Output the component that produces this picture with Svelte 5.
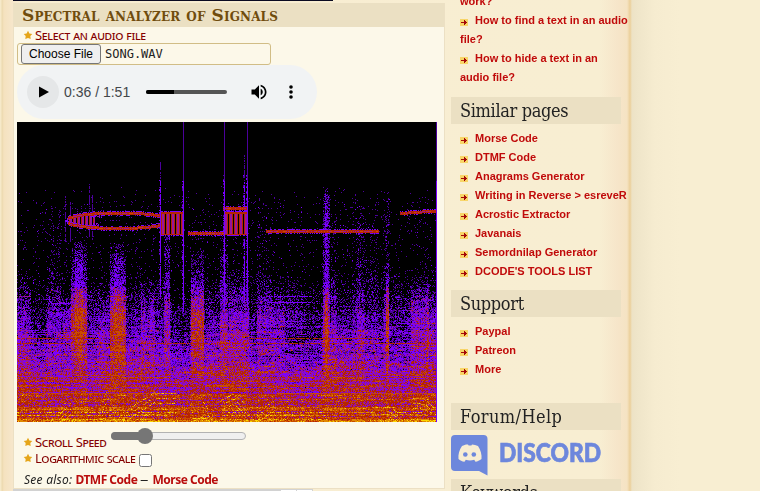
<script>
  import { onMount } from 'svelte';

  const questions = ['How to find a text in an audio file?', 'How to hide a text in an audio file?'];
  const similar = ['Morse Code', 'DTMF Code', 'Anagrams Generator', 'Writing in Reverse > esreveR', 'Acrostic Extractor', 'Javanais', 'Semordnilap Generator', "DCODE'S TOOLS LIST"];
  const support = ['Paypal', 'Patreon', 'More'];

  let canvas = $state();

  // Heat palette, from silence to full level
  const palette = [[0, 0, 0], [75, 0, 155], [122, 0, 255], [152, 18, 158], [182, 36, 2], [202, 76, 0], [224, 136, 0], [250, 215, 0]];

  // level of the background by row
  const floorLevel = [[0, -9], [52, -5], [66, -1.4], [80, -0.85], [145, -0.75], [160, -0.1], [178, 0.65], [195, 1.25], [212, 2.05], [235, 2.8], [250, 3.4], [268, 4.05], [288, 4.65], [300, 5.5]];

  // bursts: left, right, first row, gain, extra gain below row 175
  const bursts = [
    [54, 70, 120, 1.7, 1.1], [58, 66, 110, 1, 0], [93, 109, 120, 1.7, 1.1], [97, 106, 112, 0.7, 0],
    [174, 187, 126, 1.6, 1.3], [147, 153, 95, 1.6, 0.1], [203, 211, 110, 1.3, 0.1],
    [306, 313, 62, 1.8, 0], [308, 311, 55, 1.1, 0.4], [367, 372, 70, 0.9, 0.3], [369, 372, 140, 1.2, 1],
    [30, 44, 70, 0.55, 0.1], [46, 54, 180, 0.8, 0.4], [124, 138, 160, 1, 0.1],
    [240, 254, 90, 0.5, 0.4], [254, 268, 175, 0.5, 0.4], [335, 362, 75, 0.35, 0],
    [394, 412, 155, 1, 0.3], [410, 420, 150, 0.3, 0.4], [212, 232, 145, 0.9, 0.2],
    [314, 319, 90, 0.7, 0.1], [340, 348, 80, 0.5, 0.3], [80, 92, 178, 0.4, 0.3], [0, 14, 150, 0.4, 0.2],
    [14, 29, 160, -0.9, 0.2], [128, 132, 150, -0.5, 0], [154, 173, 150, -0.9, 0.3],
    [232, 240, 160, -0.5, 0], [285, 305, 150, -0.7, 0.2], [320, 366, 165, -0.2, 0]
  ];

  // faint vertical strokes: column, first row, last row
  const strokes = [[166, 0, 190], [207, 0, 190], [230, 0, 185], [143, 40, 175], [227, 33, 180], [419, 0, 300], [72, 62, 116], [48, 74, 118], [53, 80, 120], [75, 73, 118]];

  function floorAt(y) {
    for (let i = 1; i < floorLevel.length; i++) {
      const [y1, v1] = floorLevel[i];
      if (y <= y1) {
        const [y0, v0] = floorLevel[i - 1];
        return v0 + ((v1 - v0) * (y - y0)) / (y1 - y0);
      }
    }
    return 5;
  }

  onMount(() => {
    let seed = 7261;
    const rnd = () => {
      seed = (seed + 0x6d2b79f5) | 0;
      let t = Math.imul(seed ^ (seed >>> 15), 1 | seed);
      t = (t + Math.imul(t ^ (t >>> 7), 61 | t)) ^ t;
      return ((t ^ (t >>> 14)) >>> 0) / 4294967296;
    };
    const gauss = () => (rnd() + rnd() + rnd() + rnd() - 2) * 1.73;
    const ctx = canvas.getContext('2d');
    const img = ctx.createImageData(420, 300);
    const put = (x, y, c) => {
      if (x < 0 || x > 419 || y < 0 || y > 299) return;
      const [r, g, b] = palette[c];
      const i = (Math.floor(y) * 420 + Math.floor(x)) * 4;
      img.data[i] = r; img.data[i + 1] = g; img.data[i + 2] = b; img.data[i + 3] = 255;
    };
    const cols = Array.from({ length: 420 }, () => gauss() * 0.12);
    for (let y = 0; y < 300; y++) {
      const row = y > 175 ? gauss() * (y > 250 ? 0.4 : 0.2) : 0;
      let streak = 0;
      for (let x = 0; x < 420; x++) {
        if (rnd() < 0.09) streak = gauss() * (y > 200 ? 0.45 : 0.15);
        let v = floorAt(y) + row + streak + cols[x];
        for (const [l, r, top, gain, low] of bursts) {
          if (x >= l && x < r && y >= top) {
            const fade = Math.min(1, (y - top) / 35 + 0.35) * (y > 205 ? Math.max(0.1, 1 - (y - 205) / 60) : 1);
            v += (gain + low * Math.max(0, Math.min(1, (y - 160) / 30))) * fade;
          }
        }
        if (y > 180) v += 0.35 * Math.sin(x / 17 + 1.5) * Math.sin(y / 31);
        if (x > 235 && x < 305 && y > 205 && y < 245) v -= 0.5;
        v += gauss() * (y > 250 ? 0.6 : y > 190 ? 0.8 : 1);
        let c = Math.max(0, Math.min(7, Math.floor(v)));
        if (y < 165 && c > 2) c = 2;
        if (y < 270 && c > 5) c = 5;
        put(x, y, c);
      }
    }
    // steady tones
    for (const [y, a, b, c] of [[216, 0, 82, 4], [216, 232, 366, 4], [221, 0, 55, 4], [221, 120, 420, 4], [174, 0, 14, 3], [174, 92, 109, 4], [174, 250, 295, 2], [181, 30, 54, 2], [180, 252, 296, 2], [174, 310, 320, 2], [271, 0, 160, 5], [271, 260, 420, 5], [197, 230, 250, 2]]) {
      for (let x = a; x < b; x++) if (rnd() < 0.8) put(x, y, c);
    }
    for (const [x, a, b] of strokes) {
      for (let y = a; y < b; y++) {
        if (a > 0 && rnd() < 0.18) continue;
        put(x, y, y > 58 && x > 140 ? 2 : 1);
        if (y > 52 && x > 140 && x < 400 && rnd() < 0.45) put(x - 1, y, rnd() < 0.5 ? 2 : 1);
      }
    }
    // rising and falling harmonics near the bottom
    for (const [x0, y0, x1, y1] of [[42, 292, 54, 282], [82, 286, 90, 268], [110, 288, 138, 270], [138, 271, 160, 271], [186, 280, 196, 296], [204, 278, 216, 272], [216, 272, 228, 282], [240, 290, 258, 278], [370, 284, 386, 294], [396, 276, 412, 278], [408, 278, 419, 288]]) {
      for (let x = x0; x < x1; x++) {
        const y = y0 + ((y1 - y0) * (x - x0)) / (x1 - x0);
        for (let k = 0; k < 3; k++) if (rnd() < 0.6) put(x, y + k * 5, 6 + (rnd() < 0.3 ? 1 : 0));
      }
    }
    for (const [a, b] of [[0, 135], [70, 84], [125, 160], [205, 260], [255, 310], [370, 405]]) {
      for (const y of [290, 293, 297]) for (let x = a; x < b; x++) if (rnd() < 0.42) put(x, y, rnd() < 0.4 ? 7 : 6);
    }

    const band = (x0, x1, yAt, t = 3) => {
      for (let x = x0; x < x1; x++) {
        const y = Math.round(yAt(x));
        for (let k = 0; k < t; k++) put(x, y + k, k === 1 ? [3, 4, 5, 3, 4][Math.floor(rnd() * 5)] : 4);
        if (rnd() < 0.55) put(x, y - 1, 2);
        if (rnd() < 0.45) put(x, y + t, 2);
      }
    };
    const arc = (x) => Math.sqrt(Math.max(0, 1 - (Math.abs(x - 101) / 52) ** 2));
    for (let x = 48; x < 78; x++) {
      const h = 8 * arc(x) + 1;
      for (let y = 99 - h; y < 99 + h; y++) put(x, y, x < 51 ? 2 : x % 4 === 0 ? 4 : x % 4 < 3 ? 3 : 0);
    }
    for (let x = 76; x < 144; x++) {
      const edge = Math.min(x - 76, 143 - x);
      for (const y of [93, 94, 95, 101, 102, 103]) if (rnd() < 0.7 - edge / 14) put(x, y, rnd() < 0.6 ? 2 : 3);
    }
    band(51, 148, (x) => 97 - 7.5 * arc(x));
    band(51, 148, (x) => 98 + 7 * arc(x));
    const block = (x0, x1) => {
      for (let x = x0; x < x1; x++) {
        for (let y = 90; y < 113; y++) put(x, y, y < 92 || y > 111 ? 4 : [4, 3, 3, 4, 0][(x - x0) % 5]);
        if (rnd() < 0.7) put(x, 89, 2);
        if (rnd() < 0.7) put(x, 113, 2);
      }
    };
    block(144, 167);
    block(207, 230);
    band(206, 231, () => 85);
    band(171, 207, () => 110);
    band(249, 362, () => 108);
    band(383, 419, (x) => 90 - (x - 383) / 14);
    for (let y = 85; y < 120; y++) {
      for (const x of [143, 166, 207, 230]) put(x, y, 2);
    }
    ctx.putImageData(img, 0, 0);
  });
</script>

{#snippet arrow()}
  <svg class="arrow" viewBox="0 0 8 7" shape-rendering="crispEdges"><rect width="8" height="7" fill="#f8d568" /><path d="M1 3h3V1h1v1h1v1h1v1H6v1H5v1H4V4H1z" fill="#a50808" /></svg>
{/snippet}

{#snippet star()}
  <svg class="star" viewBox="0 0 10 10"><path d="M5 .8l1.400 2.600 2.900.5-2 2.200.4 3L5 7.900 2.300 9.100l.4-3-2-2.200 2.900-.5z" fill="#e5a51a" /></svg>
{/snippet}

{#snippet links(items)}
  <ul>
    {#each items as item}
      <li>{@render arrow()}<a>{item}</a></li>
    {/each}
  </ul>
{/snippet}

<div class="page">
  <main>
    <div class="topbar"></div>
    <section class="panel">
      <h2><span>Spectral analyzer of Signals</span></h2>
      <label class="file-label">{@render star()}<span class="lab l1">Select an audio file</span></label>
      <div class="file"><button>Choose File</button><span>SONG.WAV</span></div>
      <div class="player">
        <div class="play"><svg viewBox="0 0 10 12"><path d="M0 .5v11L10 6z" /></svg></div>
        <span class="time">0:36 / 1:51</span>
        <div class="track"><i></i></div>
        <svg class="vol" viewBox="0 0 24 24"><path d="M3 9v6h4l5 5V4L7 9H3zm13.500 3c0-1.770-1.020-3.290-2.500-4.030v8.050c1.480-.73 2.500-2.250 2.500-4.020zM14 3.230v2.060c2.890.86 5 3.540 5 6.710s-2.110 5.850-5 6.710v2.060c4.010-.91 7-4.490 7-8.770s-2.990-7.860-7-8.770z" /></svg>
        <svg class="dots" viewBox="0 0 4 14"><circle cx="2" cy="2" r="1.8" /><circle cx="2" cy="7" r="1.8" /><circle cx="2" cy="12" r="1.8" /></svg>
      </div>
      <canvas bind:this={canvas} width="420" height="300"></canvas>
      <div class="speed">{@render star()}<span class="lab l2">Scroll Speed</span><div class="slider"><i></i><b></b></div></div>
      <div class="log">{@render star()}<span class="lab l3">Logarithmic scale</span><span class="check"></span></div>
      <p class="also"><em>See also:</em> <a>DTMF Code</a> <span class="dash">–</span> <a>Morse Code</a></p>
    </section>
    <div class="strip"><i></i><i></i></div>
  </main>
  <aside>
    <ul class="first">
      <li>work?</li>
      {#each questions as q}
        <li>{@render arrow()}<a>{q}</a></li>
      {/each}
    </ul>
    <h3 class="h-sim"><span>Similar pages</span></h3>
    {@render links(similar)}
    <h3 class="h-sup"><span>Support</span></h3>
    {@render links(support)}
    <h3 class="h-for"><span>Forum/Help</span></h3>
    <svg class="discord" viewBox="0 0 152 42">
      <path d="M4 0h28.500a4 4 0 0 1 4 4v36.500L28 36H4a4 4 0 0 1-4-4V4a4 4 0 0 1 4-4z" fill="#6d87dc" />
      <path d="M11 11c2-1 4-1.700 6-1.500l.6 1h2.800l.6-1c2 0 4 .5 6 1.500 2.500 4 4 8.500 3.500 13-2 1.500-4 2.500-6 2.800l-1.300-2c-3 .8-5.500.8-8.400 0l-1.300 2c-2.500-.4-4.500-1.300-6-2.800-.5-5 .8-9 3.500-13z" fill="#f8edd2" />
      <circle cx="14.300" cy="19.500" r="2.300" fill="#6d87dc" /><circle cx="22.800" cy="19.500" r="2.300" fill="#6d87dc" />
      <text x="48" y="27" textLength="102" lengthAdjust="spacingAndGlyphs">DISCORD</text>
    </svg>
    <h3 class="h-key"><span>Keywords</span></h3>
  </aside>
</div>

<style>
  :global(body) { overflow: hidden; background: #f8eed2; }
  * { box-sizing: border-box; }
  .page { width: 760px; height: 491px; overflow: hidden; display: flex; font-family: "Liberation Sans", Arial, sans-serif; background: linear-gradient(90deg, #f6e9c9 0, #f6e9c9 1px, #ecd9ae 2px, #f5e2bf 4px, #f6e6ca 12px, #f8edd2 24px, #f8eed2 600px, #f6e5c9 618px, #f5e3c3 627px, #ebcf99 630px, #ede2c5 632px, #efe5c9 637px, #f6ecd0 655px, #f8eed2 680px); }
  main { width: 432px; margin-left: 13px; display: flex; flex-direction: column; flex: none; }
  .topbar { height: 1px; width: 320px; background: #0b0b22; margin-bottom: 2px; flex: none; }
  .panel { height: 486px; background: #fcf8e9; border: 1px solid #ece0c4; border-top: 0; flex: none; display: flex; flex-direction: column; padding: 0 3px; }
  h2 { margin: 0 -3px; height: 24px; background: #ebe0c3; padding-left: 8px; font: bold 17px/24px "DejaVu Serif", Georgia, serif; font-variant: small-caps; color: #704c0d; letter-spacing: .12px; white-space: nowrap; flex: none; }
  .star { width: 10px; height: 10px; flex: none; margin: 0 2px 0 6px; }
  .lab { font: 13px/16px "Noto Sans", sans-serif; font-variant: small-caps; color: #850000; white-space: nowrap; letter-spacing: -.4px; }
  .l1 { letter-spacing: -.31px; }
  .l3 { letter-spacing: -.45px; }
  .file-label { display: flex; align-items: center; height: 16px; flex: none; }
  .file { width: 254px; height: 22px; flex: none; border: 1px solid #d1bd86; border-radius: 3px; display: flex; align-items: center; padding-left: 3px; font: 12px/16px "DejaVu Sans Mono", monospace; color: #222; }
  .file button { width: 80px; height: 20px; margin-right: 4px; padding: 0; background: #efefef; border: 1px solid #767676; border-radius: 3px; font: 12px/16px "Liberation Sans", sans-serif; color: #000; }
  .player { width: 300px; height: 54px; border-radius: 27px; background: #f1f3f4; flex: none; margin-bottom: 3px; display: flex; align-items: center; padding-left: 10px; }
  .play { width: 32px; height: 32px; border-radius: 50%; background: #e5e7e8; display: flex; align-items: center; justify-content: center; }
  .play svg { width: 10px; height: 12px; margin-left: 1px; }
  .time { font: 14px/16px "Liberation Sans", sans-serif; color: #44474a; margin-left: 5px; width: 82px; white-space: nowrap; }
  .track { width: 81px; height: 4px; border-radius: 2px; background: #555; overflow: hidden; }
  .track i { display: block; width: 28px; height: 4px; background: #000; }
  .vol { width: 20px; height: 20px; margin-left: 22px; }
  .dots { width: 4px; height: 14px; margin-left: 20px; }
  canvas { width: 420px; height: 300px; display: block; flex: none; }
  .speed { display: flex; height: 28px; align-items: flex-end; flex: none; }
  .speed .star { margin-bottom: 3px; }
  .slider { width: 135px; height: 8px; border: 1px solid #b2b2b2; border-radius: 4px; background: #efefef; position: relative; margin: 0 0 10px 5px; }
  .slider i { display: block; width: 34px; height: 8px; margin: -1px; border-radius: 4px; background: #767676; }
  .slider b { position: absolute; left: 25px; top: -5px; width: 16px; height: 16px; border-radius: 50%; background: #767676; }
  .log { display: flex; height: 16px; align-items: center; flex: none; }
  .check { width: 13px; height: 13px; border: 1px solid #767676; border-radius: 2.500px; background: #fff; margin: 4px 0 0 4px; }
  .also { margin: 6px 0 0 7px; font: 12px/16px "Noto Sans", sans-serif; color: #222; white-space: nowrap; letter-spacing: 0; }
  .also em { letter-spacing: .25px; }
  .also a { font-weight: bold; color: #b90d0d; letter-spacing: -.5px; }
  .dash { display: inline-block; width: 9px; transform: scaleX(1.4); transform-origin: left; }
  .strip { width: 300px; height: 2px; background: #d2d2d2; display: flex; justify-content: flex-end; gap: 1px; padding: 1px 1px 0 0; }
  .strip i { width: 15px; background: #fff; }
  aside { width: 186px; flex: none; padding-left: 6px; }
  ul { list-style: none; margin: 5px 0 0 9px; padding: 0; }
  ul.first { margin-top: -8px; }
  li { line-height: 19px; font-size: 11px; font-weight: bold; color: #c00a0a; width: 169px; }
  .arrow { width: 8px; height: 7px; margin-right: 7px; vertical-align: -2px; }
  h3 { width: 170px; height: 27px; margin: 9px 0 0; padding-left: 9px; background: #ebe0c3; font: 18px/28px "DejaVu Serif Condensed", "DejaVu Serif", Georgia, serif; color: #222; white-space: nowrap; overflow: hidden; letter-spacing: -.35px; }
  .h-sim { margin-top: 10px; }
  .h-for { margin-top: 24px; letter-spacing: .4px; }
  .discord { display: block; width: 152px; height: 42px; margin-top: 5px; }
  .discord text { font: 900 26px "Lato", sans-serif; fill: #6d87dc; stroke: #6d87dc; stroke-width: .7px; }
  .h-key { margin-top: 2px; }
</style>
